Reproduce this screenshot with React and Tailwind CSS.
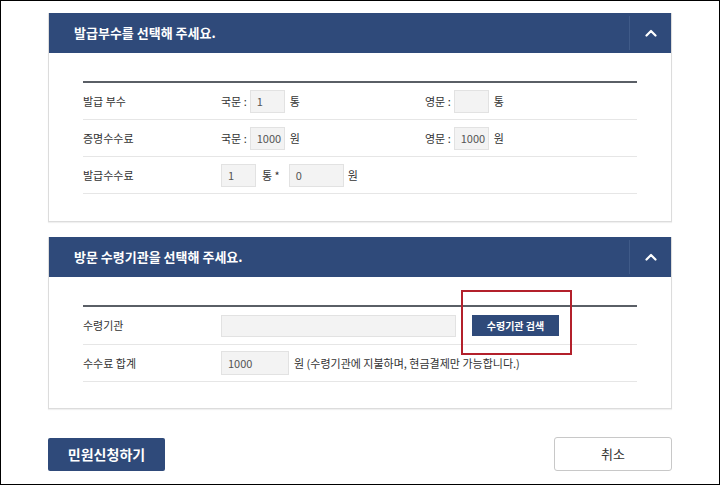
import React from 'react';

const font = { fontFamily: '"Noto Sans CJK KR", "Noto Sans", sans-serif' };

function Chevron() {
  return (
    <svg width="12" height="8" viewBox="0 0 12 8" fill="none" stroke="white" strokeWidth={2.2} strokeLinecap="round" strokeLinejoin="round">
      <path d="M1.5 6.5 6 2l4.5 4.5" />
    </svg>
  );
}

function PanelHeader({ title }) {
  return (
    <div className="flex h-[40px] items-stretch bg-[#2f4a7a]">
      <div className="flex flex-1 items-center pl-[25px] text-[13px] font-bold text-white">{title}</div>
      <div className="my-[3px] w-px bg-[#3f5a88]" />
      <div className="flex w-[41px] items-center justify-center">
        <Chevron />
      </div>
    </div>
  );
}

function Box({ w, children }) {
  return (
    <div className={`flex h-[23px] items-center border border-[#e2e2e2] bg-[#f3f3f3] pl-[6px] text-[11px] text-[#555] ${w}`}>
      {children}
    </div>
  );
}

function Row({ label, children, h = 'h-[37px]' }) {
  return (
    <div className={`flex items-center border-b border-[#e6e6e6] ${h}`}>
      <div className="w-[138px] text-[11px] text-[#333]">{label}</div>
      <div className="flex flex-1 items-center text-[11px] text-[#333]">{children}</div>
    </div>
  );
}

export default function App() {
  return (
    <div className="h-[485px] w-[720px] border border-black bg-white px-[47px] pt-[12px]" style={font}>
      {/* panel 1 */}
      <div className="border border-t-0 border-[#dcdcdc] shadow-[0_1px_1px_rgba(0,0,0,0.06)]">
        <PanelHeader title="발급부수를 선택해 주세요." />
        <div className="px-[34px] pb-[27px] pt-[28px]">
          <div className="border-t-2 border-[#5a5f66]">
            <Row label="발급 부수">
              <div className="flex w-[204px] items-center gap-[3px]">
                <span>국문 :</span>
                <Box w="w-[35px]">1</Box>
                <span className="ml-[2px]">통</span>
              </div>
              <div className="flex items-center gap-[3px]">
                <span>영문 :</span>
                <Box w="w-[35px]" />
                <span className="ml-[2px]">통</span>
              </div>
            </Row>
            <Row label="증명수수료">
              <div className="flex w-[204px] items-center gap-[3px]">
                <span>국문 :</span>
                <Box w="w-[35px]">1000</Box>
                <span className="ml-[2px]">원</span>
              </div>
              <div className="flex items-center gap-[3px]">
                <span>영문 :</span>
                <Box w="w-[35px]">1000</Box>
                <span className="ml-[2px]">원</span>
              </div>
            </Row>
            <Row label="발급수수료">
              <Box w="w-[35px]">1</Box>
              <span className="ml-[6px]">통 *</span>
              <div className="ml-[9px]">
                <Box w="w-[55px]">0</Box>
              </div>
              <span className="ml-[4px]">원</span>
            </Row>
          </div>
        </div>
      </div>

      {/* panel 2 */}
      <div className="mt-[15px] border border-t-0 border-[#dcdcdc] shadow-[0_1px_1px_rgba(0,0,0,0.06)]">
        <PanelHeader title="방문 수령기관을 선택해 주세요." />
        <div className="relative px-[34px] pb-[26px] pt-[28px]">
          <div className="border-t-2 border-[#5a5f66]">
            <Row label="수령기관" h="h-[38px]">
              <div className="h-[22px] w-[235px] border border-[#e2e2e2] bg-[#f3f3f3]" />
              <button className="ml-[16px] flex h-[21px] w-[87px] items-center justify-center bg-[#2f4a7a] text-[10px] font-bold text-white">
                수령기관 검색
              </button>
            </Row>
            <Row label="수수료 합계">
              <Box w="w-[68px] h-[24px]">1000</Box>
              <span className="ml-[5px]">원 (수령기관에 지불하며, 현금결제만 가능합니다.)</span>
            </Row>
          </div>
          <div className="absolute left-[412px] top-[13px] h-[65px] w-[111px] border-2 border-[#b3202b]" />
        </div>
      </div>

      {/* buttons */}
      <div className="mt-[28px] flex items-center justify-between">
        <button className="h-[33px] w-[117px] rounded-[2px] bg-[#2f4a7a] text-[14px] font-bold text-white">민원신청하기</button>
        <button className="h-[34px] w-[118px] rounded-[3px] border border-[#c8c8c8] bg-white text-[13px] text-[#333]">취소</button>
      </div>
    </div>
  );
}
